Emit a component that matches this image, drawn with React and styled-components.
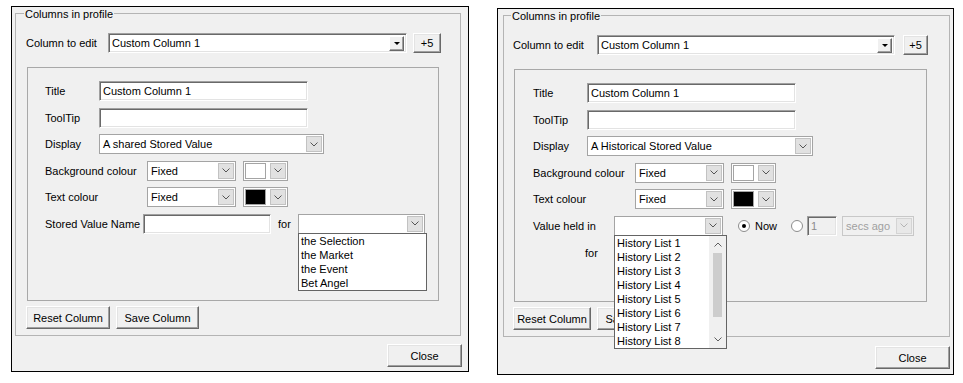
import styled, { createGlobalStyle } from "styled-components";

const GlobalStyle = createGlobalStyle`
  html, body {
    margin: 0;
    padding: 0;
    background: #ffffff;
  }
  body {
    font-family: "Liberation Sans", Arial, sans-serif;
    font-size: 11px;
    color: #000;
  }
`

const Page = styled.div`
  display: flex;
  align-items: flex-start;
  gap: 28px;
  padding-left: 11px;
  width: 963px;
  height: 383px;
  box-sizing: border-box;
`

const Dialog = styled.div`
  box-sizing: border-box;
  margin-top: ${(p) => p.$top}px;
  width: ${(p) => p.$w}px;
  height: ${(p) => p.$h}px;
  border: 1px solid #000;
  background: #f0f0f0;
  display: flex;
  flex-direction: column;
  padding: 0 ${(p) => p.$padR}px 0 ${(p) => p.$padL}px;
`

const GroupBox = styled.fieldset`
  margin: -1px 0 0 0;
  padding: 13px 0 6px ${(p) => p.$padL}px;
  border: 1px solid #b4b4b4;
  min-width: 0;
  display: flex;
  flex-direction: column;
  align-items: flex-start;
`

const Legend = styled.legend`
  margin-left: ${(p) => p.$ml}px;
  padding: 3px 1px 0 1px;
  line-height: 11px;
  font-size: 11px;
`

const Row = styled.div`
  display: flex;
  align-items: center;
  height: 20px;
  gap: ${(p) => p.$gap || 0}px;
`

const Label = styled.span`
  display: inline-block;
  width: ${(p) => p.$w}px;
  margin-left: ${(p) => p.$ml || 0}px;
  white-space: nowrap;
  color: ${(p) => (p.$disabled ? "#a0a0a0" : "#000")};
`

const Inner = styled.div`
  box-sizing: border-box;
  margin-top: 14px;
  margin-left: ${(p) => p.$ml}px;
  width: ${(p) => p.$w}px;
  height: ${(p) => p.$h}px;
  border: 1px solid #a8a8a8;
  padding: 13px 0 0 ${(p) => p.$padL}px;
  display: flex;
  flex-direction: column;
  gap: 6.6px;
`

const TextBox = styled.div`
  box-sizing: border-box;
  width: ${(p) => p.$w}px;
  height: 20px;
  background: ${(p) => (p.$disabled ? "#f0f0f0" : "#fff")};
  color: ${(p) => (p.$disabled ? "#8c8c8c" : "#000")};
  border-top: 1px solid #a0a0a0;
  border-left: 1px solid #a0a0a0;
  border-right: 1px solid #fff;
  border-bottom: 1px solid #fff;
  box-shadow: inset 1px 1px 0 #696969, inset -1px -1px 0 #e3e3e3;
  padding: 0 3px;
  line-height: 18px;
  white-space: nowrap;
  overflow: hidden;
`

const ClassicCombo = styled(TextBox)`
  position: relative;
  display: flex;
  align-items: center;
  justify-content: space-between;
  padding: 0 2px 0 3px;
`

const ClassicArrow = styled.div`
  box-sizing: border-box;
  width: 15px;
  height: 15px;
  background: #f0f0f0;
  border-top: 1px solid #fff;
  border-left: 1px solid #fff;
  border-right: 1px solid #696969;
  border-bottom: 1px solid #696969;
  box-shadow: inset -1px -1px 0 #a0a0a0;
  display: flex;
  align-items: center;
  justify-content: center;
  &::after {
    content: "";
    border-left: 3px solid transparent;
    border-right: 3px solid transparent;
    border-top: 3px solid #000;
  }
`

const FlatCombo = styled.div`
  box-sizing: border-box;
  position: relative;
  width: ${(p) => p.$w}px;
  height: 20px;
  border: 1px solid ${(p) => (p.$disabled ? "#c8c8c8" : "#a4a4a4")};
  background: ${(p) => (p.$disabled ? "#f0f0f0" : "#fff")};
  color: ${(p) => (p.$disabled ? "#a0a0a0" : "#000")};
  display: flex;
  align-items: center;
  padding: 1px;
`

const ComboText = styled.span`
  flex: 1;
  padding-left: 2px;
  white-space: nowrap;
  overflow: hidden;
`

const ChevronButton = styled.div`
  box-sizing: border-box;
  width: 16px;
  height: 16px;
  background: ${(p) => (p.$disabled ? "#e8e8e8" : "#e1e1e1")};
  border: 1px solid ${(p) => (p.$disabled ? "#d4d4d4" : "#c2c2c2")};
  display: flex;
  align-items: center;
  justify-content: center;
`

const Swatch = styled.div`
  box-sizing: border-box;
  width: 22px;
  height: 16px;
  margin-right: 4px;
  background: ${(p) => p.$color};
  border: 1px solid #a4a4a4;
`

const PushButton = styled.div`
  box-sizing: border-box;
  width: ${(p) => p.$w}px;
  height: ${(p) => p.$h || 23}px;
  background: #f0f0f0;
  border-top: 1px solid #fff;
  border-left: 1px solid #fff;
  border-right: 1px solid #696969;
  border-bottom: 1px solid #696969;
  box-shadow: inset -1px -1px 0 #a0a0a0, inset 1px 1px 0 #e3e3e3;
  display: flex;
  align-items: center;
  justify-content: center;
  white-space: nowrap;
`

const ButtonRow = styled.div`
  display: flex;
  gap: 6px;
  margin-top: 5px;
`

const FooterRow = styled.div`
  display: flex;
  justify-content: flex-end;
  margin-top: ${(p) => p.$mt}px;
  margin-right: ${(p) => p.$mr}px;
`

const DropList = styled.div`
  box-sizing: border-box;
  position: absolute;
  z-index: 5;
  top: 100%;
  left: -1px;
  width: ${(p) => p.$w}px;
  border: 1px solid #646464;
  background: #fff;
  display: flex;
`

const Items = styled.div`
  flex: 1;
  display: flex;
  flex-direction: column;
`

const Item = styled.div`
  height: 14px;
  line-height: 14px;
  padding-left: 2px;
  white-space: nowrap;
`

const ScrollBar = styled.div`
  width: 17px;
  background: #f0f0f0;
  display: flex;
  flex-direction: column;
  align-items: center;
`

const ScrollArrow = styled.div`
  height: 17px;
  width: 17px;
  display: flex;
  align-items: center;
  justify-content: center;
`

const ScrollThumb = styled.div`
  width: 9px;
  height: 64px;
  background: #cdcdcd;
`

const ScrollSpace = styled.div`
  flex: 1;
`

const RadioGroup = styled.label`
  display: flex;
  align-items: center;
  gap: 5px;
  margin-left: ${(p) => p.$ml || 0}px;
  margin-right: ${(p) => p.$mr || 0}px;
`

const RadioDot = styled.span`
  box-sizing: border-box;
  width: 12px;
  height: 12px;
  border-radius: 50%;
  border: 1px solid #8c8c8c;
  background: #fff;
  display: flex;
  align-items: center;
  justify-content: center;
  &::after {
    content: "";
    width: 4px;
    height: 4px;
    border-radius: 50%;
    background: ${(p) => (p.$checked ? "#000" : "transparent")};
  }
`

const SecsBox = styled(TextBox)`
  margin-right: 5px;
`

function Chevron({ color = "#555", up = false }) {
  return (
    <svg width="8" height="5" viewBox="0 0 8 5">
      <path
        d={up ? "M0.5 4.5 L4 1 L7.5 4.5" : "M0.5 0.5 L4 4 L7.5 0.5"}
        fill="none"
        stroke={color}
        strokeWidth="1"
      />
    </svg>
  )
}

function Combo({ w, text, disabled, children }) {
  return (
    <FlatCombo $w={w} $disabled={disabled}>
      <ComboText>{text}</ComboText>
      <ChevronButton $disabled={disabled}>
        <Chevron color={disabled ? "#b4b4b4" : "#555"} />
      </ChevronButton>
      {children}
    </FlatCombo>
  )
}

function ColourCombo({ color }) {
  return (
    <FlatCombo $w={45}>
      <Swatch $color={color} />
      <ChevronButton>
        <Chevron />
      </ChevronButton>
    </FlatCombo>
  )
}

function ColumnRow({ labelW, comboW, gap, plusW }) {
  return (
    <Row $gap={gap}>
      <Label $w={labelW - gap}>Column to edit</Label>
      <ClassicCombo $w={comboW}>
        <span>Custom Column 1</span>
        <ClassicArrow />
      </ClassicCombo>
      <PushButton $w={plusW} $h={20}>+5</PushButton>
    </Row>
  )
}

function CommonRows({ displayText, displayW }) {
  return (
    <>
      <Row>
        <Label $w={54}>Title</Label>
        <TextBox $w={209}>Custom Column 1</TextBox>
      </Row>
      <Row>
        <Label $w={54}>ToolTip</Label>
        <TextBox $w={209} />
      </Row>
      <Row>
        <Label $w={54}>Display</Label>
        <Combo w={displayW} text={displayText} />
      </Row>
      <Row $gap={7}>
        <Label $w={95}>Background colour</Label>
        <Combo w={89} text="Fixed" />
        <ColourCombo color="#ffffff" />
      </Row>
      <Row $gap={7}>
        <Label $w={95}>Text colour</Label>
        <Combo w={89} text="Fixed" />
        <ColourCombo color="#000000" />
      </Row>
    </>
  )
}

function LeftDialog() {
  return (
    <Dialog $top={6} $w={458} $h={366} $padL={3} $padR={7}>
      <GroupBox $padL={10}>
        <Legend $ml={-2}>Columns in profile</Legend>
        <ColumnRow labelW={82} comboW={299} gap={6} plusW={28} />
        <Inner $ml={1} $w={412} $h={234} $padL={17}>
          <CommonRows displayText="A shared Stored Value" displayW={225} />
          <Row>
            <Label $w={98}>Stored Value Name</Label>
            <TextBox $w={128} />
            <Label $w={20} $ml={7}>for</Label>
            <Combo w={127}>
              <DropList $w={129}>
                <Items>
                  <Item>the Selection</Item>
                  <Item>the Market</Item>
                  <Item>the Event</Item>
                  <Item>Bet Angel</Item>
                </Items>
              </DropList>
            </Combo>
          </Row>
        </Inner>
        <ButtonRow>
          <PushButton $w={84}>Reset Column</PushButton>
          <PushButton $w={83}>Save Column</PushButton>
        </ButtonRow>
      </GroupBox>
      <FooterRow $mt={8} $mr={-1}>
        <PushButton $w={75}>Close</PushButton>
      </FooterRow>
    </Dialog>
  )
}

const history = [1, 2, 3, 4, 5, 6, 7, 8]

function RightDialog() {
  return (
    <Dialog $top={8} $w={457} $h={367} $padL={5} $padR={3}>
      <GroupBox $padL={9}>
        <Legend $ml={-2}>Columns in profile</Legend>
        <ColumnRow labelW={84} comboW={298} gap={8} plusW={25} />
        <Inner $ml={1} $w={413} $h={233} $padL={18}>
          <CommonRows displayText="A Historical Stored Value" displayW={226} />
          <Row>
            <Label $w={81}>Value held in</Label>
            <Combo w={109}>
              <DropList $w={113}>
                <Items>
                  {history.map((n) => (
                    <Item key={n}>History List {n}</Item>
                  ))}
                </Items>
                <ScrollBar>
                  <ScrollArrow>
                    <Chevron up color="#606060" />
                  </ScrollArrow>
                  <ScrollThumb />
                  <ScrollSpace />
                  <ScrollArrow>
                    <Chevron color="#606060" />
                  </ScrollArrow>
                </ScrollBar>
              </DropList>
            </Combo>
            <RadioGroup $ml={15}>
              <RadioDot $checked />
              Now
            </RadioGroup>
            <RadioGroup $ml={14} $mr={4}>
              <RadioDot />
            </RadioGroup>
            <SecsBox $w={30} $disabled>1</SecsBox>
            <Combo w={72} text="secs ago" disabled />
          </Row>
          <Row>
            <Label $w={20} $ml={52}>for</Label>
          </Row>
        </Inner>
        <ButtonRow>
          <PushButton $w={78}>Reset Column</PushButton>
          <PushButton $w={83}>Save Column</PushButton>
        </ButtonRow>
      </GroupBox>
      <FooterRow $mt={9} $mr={0}>
        <PushButton $w={75}>Close</PushButton>
      </FooterRow>
    </Dialog>
  )
}

export default function App() {
  return (
    <>
      <GlobalStyle />
      <Page>
        <LeftDialog />
        <RightDialog />
      </Page>
    </>
  )
}
